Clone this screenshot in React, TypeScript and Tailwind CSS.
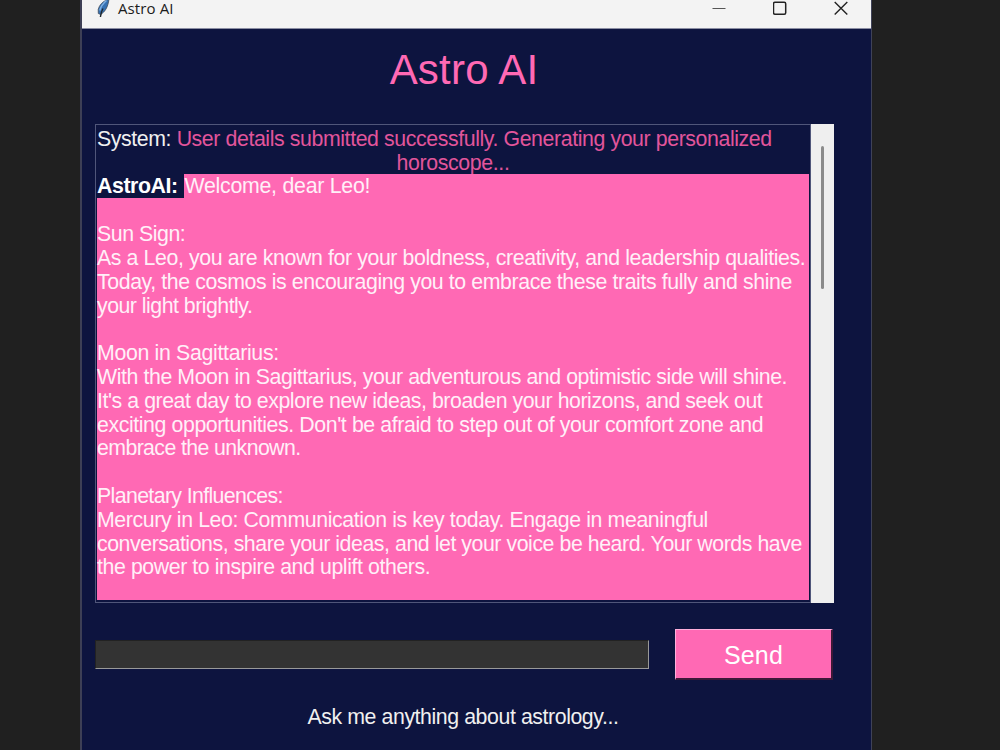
import React from 'react';

interface Line {
  text: string;
  tracking?: string;
}

// Reply lines, wrapped the way the text widget wraps them
const replyLines: Line[] = [
  { text: '' },
  { text: 'Sun Sign:', tracking: 'tracking-[-0.45px]' },
  { text: 'As a Leo, you are known for your boldness, creativity, and leadership qualities.', tracking: 'tracking-[-0.39px]' },
  { text: 'Today, the cosmos is encouraging you to embrace these traits fully and shine', tracking: 'tracking-[-0.4px]' },
  { text: 'your light brightly.', tracking: 'tracking-[-0.5px]' },
  { text: '' },
  { text: 'Moon in Sagittarius:', tracking: 'tracking-[-0.32px]' },
  { text: 'With the Moon in Sagittarius, your adventurous and optimistic side will shine.', tracking: 'tracking-[-0.41px]' },
  { text: "It's a great day to explore new ideas, broaden your horizons, and seek out", tracking: 'tracking-[-0.44px]' },
  { text: "exciting opportunities. Don't be afraid to step out of your comfort zone and", tracking: 'tracking-[-0.4px]' },
  { text: 'embrace the unknown.', tracking: 'tracking-[-0.6px]' },
  { text: '' },
  { text: 'Planetary Influences:', tracking: 'tracking-[-0.62px]' },
  { text: 'Mercury in Leo: Communication is key today. Engage in meaningful', tracking: 'tracking-[-0.38px]' },
  { text: 'conversations, share your ideas, and let your voice be heard. Your words have', tracking: 'tracking-[-0.44px]' },
  { text: 'the power to inspire and uplift others.', tracking: 'tracking-[-0.41px]' },
];

function FeatherIcon() {
  return (
    <svg className="block h-[19px] w-[14px]" viewBox="0 0 14 19">
      <path d="M13 -1C7 1 3.2 5 2.2 9.5L2.3 13.5L4.6 14.5C8.8 12 12 7.5 13 -1Z" fill="#3672b3" stroke="#39424d" strokeWidth="0.7" />
      <path d="M10.5 0.5C7 3.5 4.8 6.5 3.8 10.5" stroke="#7fb0e2" strokeWidth="1.5" fill="none" />
      <path d="M7 8.5C5.5 11 4.8 13 4.4 17" stroke="#1f262d" strokeWidth="1.4" fill="none" />
    </svg>
  );
}

function TitleBar() {
  return (
    <div className="flex h-[29px] items-start border-b border-[#8b8ea3] bg-[#f3f3f3] pl-[14px] text-[#1b1b1b]">
      <FeatherIcon />
      <span className="ml-[8px] font-['Open_Sans',sans-serif] text-[15px] leading-[17px] tracking-[0.1px]">Astro AI</span>
      <div className="mr-[23px] ml-auto flex gap-[47px] pt-[1px]">
        <svg className="h-[15px] w-[14px]" viewBox="0 0 14 15">
          <path d="M0.5 7.5H13.5" stroke="#555" strokeWidth="1" />
        </svg>
        <svg className="h-[15px] w-[14px]" viewBox="0 0 14 15">
          <rect x="0.5" y="1.3" width="12.2" height="12" rx="1.5" fill="none" stroke="#222" strokeWidth="1.5" />
        </svg>
        <svg className="h-[15px] w-[14px]" viewBox="0 0 14 15">
          <path d="M0.7 1L13.3 13.6M13.3 1L0.7 13.6" stroke="#222" strokeWidth="1.4" />
        </svg>
      </div>
    </div>
  );
}

function ChatLog() {
  return (
    <div className="flex h-[479px] w-[739px]">
      <div className="flex w-[716px] flex-col border border-[#50567a] pt-[2px] pr-[1px] pb-[2px] pl-[1px] text-[21.3px] leading-[25.4px] whitespace-pre">
        <div className="h-[23.8px] tracking-[-0.4px] text-[#f0f0f0]">
          System: <span className="text-[#e2559b]">User details submitted successfully. Generating your personalized</span>
        </div>
        <div className="h-[23.2px] text-center tracking-[-0.35px] text-[#e2559b]">horoscope...</div>
        <div className="flex h-[24.4px] leading-[25px]">
          <span className="w-[87px] font-bold tracking-[-0.4px] text-white">AstroAI: </span>
          <span className="flex-1 bg-[#ff69b4] pl-[0.5px] tracking-[-0.25px] text-[#fff0f8]">Welcome, dear Leo!</span>
        </div>
        <div className="flex-1 bg-[#ff69b4] leading-[25px] text-[#fff0f8]">
          {replyLines.map((line, i) => (
            <div key={i} className={`h-[23.8px] ${line.tracking ?? ''}`}>{line.text}</div>
          ))}
        </div>
      </div>
      <div className="flex w-[23px] justify-center bg-[#efefef] pt-[22px]">
        <div className="h-[143px] w-[3px] rounded-full bg-[#8b8b8b]" />
      </div>
    </div>
  );
}

export default function App() {
  return (
    <div className="flex h-[750px] w-[1000px] overflow-hidden bg-[#202020] pl-[80px] font-['Liberation_Sans',sans-serif]">
      <div className="w-[792px] border-r border-l-2 border-r-[#3f4258] border-l-[#3d3f55] bg-[#0d143f]">
        <TitleBar />
        <h1 className="mt-[17px] h-[48px] pr-[25px] text-center text-[42px] leading-[48px] tracking-[0.2px] text-[#ff69b4]">Astro AI</h1>
        <div className="mt-[30px] ml-[13px]">
          <ChatLog />
          <div className="mt-[26px] flex items-center">
            <div className="h-[29px] w-[554px] border border-t-[#222] border-r-[#999] border-b-[#999] border-l-[#222] bg-[#333]" />
            <button className="ml-[26px] h-[51px] w-[158px] border border-t-[#ffb0da] border-r-2 border-r-[#3c1938] border-b-2 border-b-[#3c1938] border-l-[#ffb0da] bg-[#ff69b4] pt-[2px] text-[25px] leading-[46px] tracking-[0.1px] text-white">
              Send
            </button>
          </div>
          <p className="mt-[25px] w-[736px] text-center text-[21.3px] leading-[25px] tracking-[-0.42px] text-[#f0f0f0]">Ask me anything about astrology...</p>
        </div>
      </div>
    </div>
  );
}
